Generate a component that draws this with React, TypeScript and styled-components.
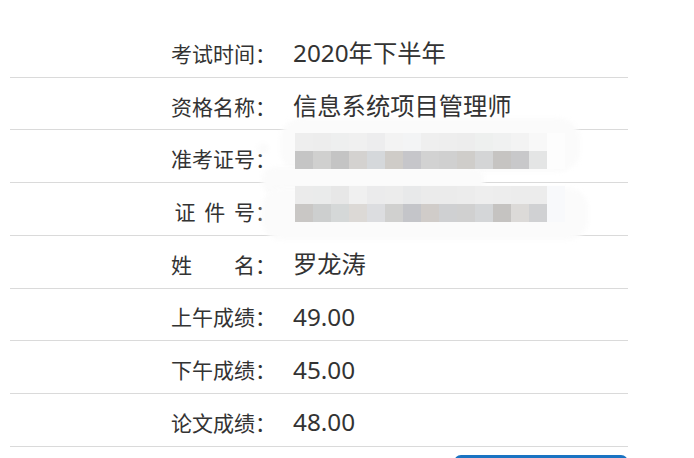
import React from "react";
import styled, { createGlobalStyle } from "styled-components";

const Global = createGlobalStyle`
  html, body { margin: 0; padding: 0; background: #fff; }
  body { font-family: "Noto Sans CJK SC", "Noto Sans", sans-serif; color: #333; }
`;

const Page = styled.div`
  padding: 25px 66px 0 10px;
  width: 618px;
`;

const Table = styled.div`
  position: relative;
  display: flex;
  flex-direction: column;
`;

const Row = styled.div`
  box-sizing: border-box;
  display: grid;
  grid-template-columns: 266px 1fr;
  height: 52.72px;
  border-bottom: 1px solid #dadada;
`;

const Label = styled.div<{ $ws?: number }>`
  font-size: 21px;
  line-height: 1;
  text-align: right;
  align-self: center;
  padding-top: 5px;
  white-space: pre;
  word-spacing: ${(p) => p.$ws ?? 0}px;
`;

const Value = styled.div`
  font-family: "Noto Sans", "Noto Sans CJK SC", sans-serif;
  font-size: 24.3px;
  line-height: 1;
  padding-left: 17px;
  align-self: center;
  padding-top: 5px;
  position: relative;
  z-index: 2;
`;

const Mosaic = styled.div`
  position: relative;
  z-index: 2;
  align-self: start;
  margin: 3px 0 0 19px;
  display: grid;
  grid-template-columns: repeat(15, 18px);
  grid-auto-rows: 18px;
`;

const Cell = styled.div<{ $c: string }>`
  background: ${(p) => p.$c};
`;

const Smear = styled.div<{ $l: number; $t: number; $w: number; $h: number; $r: number }>`
  position: absolute;
  left: ${(p) => p.$l}px;
  top: ${(p) => p.$t}px;
  width: ${(p) => p.$w}px;
  height: ${(p) => p.$h}px;
  border-radius: ${(p) => p.$r}px;
  background: #fbfbfb;
  filter: blur(2px);
  z-index: 1;
`;

const Actions = styled.div`
  display: flex;
  justify-content: flex-end;
  padding-top: 8px;
`;

const Button = styled.button`
  width: 174px;
  height: 40px;
  border: none;
  border-radius: 7px;
  background: #1a73c2;
  color: #fff;
  font-family: inherit;
  font-size: 16px;
`;

const mosaicA = [
  ["#eeeeee", "#ededed", "#eeefef", "#f0f0f0", "#ededee", "#f3f3f3", "#f3f4f5", "#efefef", "#eeeeee", "#ededed", "#eef0ef", "#f0f1f1", "#f3f3f3", "#f8f8f8", "#fdfdfd"],
  ["#c5c5c5", "#d0d0cf", "#c4c4c4", "#d4d2d0", "#d5d8db", "#cfccc8", "#c6c6ca", "#d2d2d2", "#d0d0d0", "#cfcdca", "#d4d5d6", "#c6c4c2", "#c8c8ca", "#e4e5e5", "#fdfdfd"],
];
const mosaicB = [
  ["#ebebeb", "#eaebeb", "#e7e7e7", "#f0f0f0", "#ebebec", "#ececec", "#e8e9ea", "#ebebeb", "#ebebeb", "#ececec", "#eeeeee", "#ededed", "#ececec", "#ececec", "#f8f9fb"],
  ["#c9c7c5", "#cdcfcf", "#d5d8d8", "#dcd9d6", "#dcdde0", "#d0d0cf", "#c4c5c9", "#d0ccc9", "#cfd0d2", "#d0d0d0", "#d4d6d8", "#c5c3c1", "#dcdad8", "#d0d1d3", "#f8f9fb"],
];

const MosaicBlock = ({ rows }: { rows: string[][] }) => (
  <Mosaic>
    {rows.flat().map((c, i) => (
      <Cell key={i} $c={c} />
    ))}
  </Mosaic>
);

export default function App() {
  return (
    <>
      <Global />
      <Page>
        <Table>
          <Smear $l={270} $t={93} $w={300} $h={54} $r={22} />
          <Smear $l={252} $t={142} $w={222} $h={28} $r={12} />
          <Smear $l={252} $t={163} $w={326} $h={52} $r={20} />
          <Smear $l={247} $t={118} $w={12} $h={11} $r={6} />
          <Row>
            <Label>考试时间：</Label>
            <Value>2020年下半年</Value>
          </Row>
          <Row>
            <Label>资格名称：</Label>
            <Value>信息系统项目管理师</Value>
          </Row>
          <Row>
            <Label>准考证号：</Label>
            <MosaicBlock rows={mosaicA} />
          </Row>
          <Row>
            <Label $ws={4}>证 件 号：</Label>
            <MosaicBlock rows={mosaicB} />
          </Row>
          <Row>
            <Label>姓　　名：</Label>
            <Value>罗龙涛</Value>
          </Row>
          <Row>
            <Label>上午成绩：</Label>
            <Value>49.00</Value>
          </Row>
          <Row>
            <Label>下午成绩：</Label>
            <Value>45.00</Value>
          </Row>
          <Row>
            <Label>论文成绩：</Label>
            <Value>48.00</Value>
          </Row>
        </Table>
        <Actions>
          <Button type="button" />
        </Actions>
      </Page>
    </>
  );
}
